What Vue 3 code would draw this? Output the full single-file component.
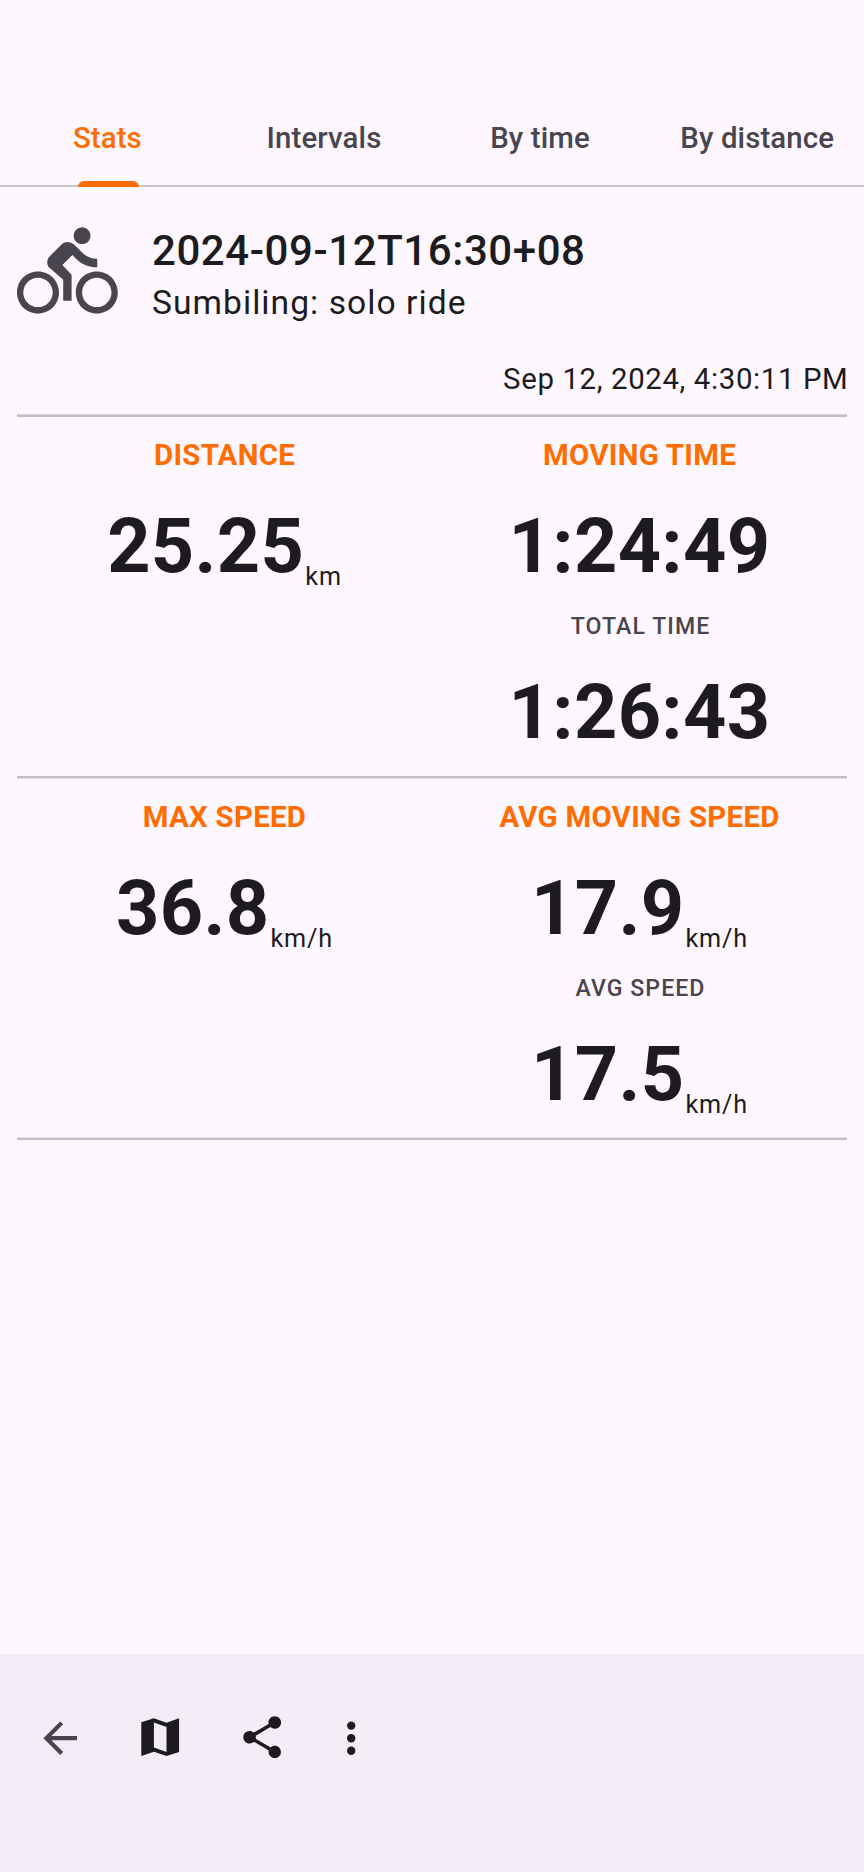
<script setup>
const tabs = ['Stats', 'Intervals', 'By time', 'By distance']

const sections = [
  [
    [{ label: 'DISTANCE', value: '25.25', unit: 'km' }],
    [
      { label: 'MOVING TIME', value: '1:24:49' },
      { label: 'TOTAL TIME', value: '1:26:43', secondary: true },
    ],
  ],
  [
    [{ label: 'MAX SPEED', value: '36.8', unit: 'km/h' }],
    [
      { label: 'AVG MOVING SPEED', value: '17.9', unit: 'km/h' },
      { label: 'AVG SPEED', value: '17.5', unit: 'km/h', secondary: true },
    ],
  ],
]
</script>

<template>
  <div class="screen">
    <nav class="tabs">
      <div v-for="(tab, i) in tabs" :key="tab" class="tab" :class="{ active: i === 0 }">
        {{ tab }}
      </div>
    </nav>

    <main class="content">
      <header class="track">
        <svg class="bike" viewBox="0 0 24 24">
          <path
            d="M15.5 5.5c1.1 0 2-.9 2-2s-.9-2-2-2-2 .9-2 2 .9 2 2 2zM5 12c-2.8 0-5 2.2-5 5s2.2 5 5 5 5-2.2 5-5-2.2-5-5-5zm0 8.5c-1.9 0-3.5-1.6-3.5-3.5s1.6-3.5 3.5-3.5 3.5 1.6 3.5 3.5-1.6 3.5-3.5 3.5zm5.8-10l2.4-2.4.8.8c1.3 1.3 3 2.1 5.1 2.1V9c-1.5 0-2.7-.6-3.6-1.5l-1.9-1.9c-.5-.4-1-.6-1.6-.6s-1.1.2-1.4.6L7.8 8.4c-.4.4-.6.9-.6 1.4 0 .6.2 1.1.6 1.4L11 14v5h2v-6.2l-2.2-2.3zM19 12c-2.8 0-5 2.2-5 5s2.2 5 5 5 5-2.2 5-5-2.2-5-5-5zm0 8.5c-1.9 0-3.5-1.6-3.5-3.5s1.6-3.5 3.5-3.5 3.5 1.6 3.5 3.5-1.6 3.5-3.5 3.5z"
          />
        </svg>
        <div class="names">
          <h1 class="title">2024-09-12T16:30+08</h1>
          <p class="subtitle">Sumbiling: solo ride</p>
        </div>
      </header>
      <p class="date">Sep 12, 2024, 4:30:11 PM</p>

      <section v-for="(columns, s) in sections" :key="s" class="section">
        <div v-for="(stats, c) in columns" :key="c" class="column">
          <div
            v-for="stat in stats"
            :key="stat.label"
            class="stat"
            :class="{ secondary: stat.secondary }"
          >
            <div class="label">{{ stat.label }}</div>
            <div class="reading">
              <span class="value">{{ stat.value }}</span>
              <span v-if="stat.unit" class="unit">{{ stat.unit }}</span>
            </div>
          </div>
        </div>
      </section>
      <div class="end-line"></div>
    </main>

    <footer class="bar">
      <svg class="icon back" viewBox="0 0 24 24">
        <path d="M20 11H7.83l5.59-5.59L12 4l-8 8 8 8 1.41-1.41L7.83 13H20z" />
      </svg>
      <svg class="icon map" viewBox="0 0 24 24">
        <path
          fill-rule="evenodd"
          d="M3 4.9L9 3l6 2.1L21 3v16l-6 2-6-2.1L3 21zM9 5v11.9l6 2.1V7.1z"
        />
      </svg>
      <svg class="icon share" viewBox="0 0 24 24">
        <path
          d="M18 16.08c-.76 0-1.44.3-1.96.77L8.91 12.7c.05-.23.09-.46.09-.7s-.04-.47-.09-.7l7.05-4.11c.54.5 1.25.81 2.04.81 1.66 0 3-1.34 3-3s-1.34-3-3-3-3 1.34-3 3c0 .24.04.47.09.7L8.04 9.81C7.5 9.31 6.79 9 6 9c-1.66 0-3 1.34-3 3s1.34 3 3 3c.79 0 1.5-.31 2.04-.81l7.12 4.16c-.05.21-.08.43-.08.65 0 1.61 1.31 2.92 2.92 2.92s2.92-1.31 2.92-2.92-1.31-2.92-2.92-2.92z"
        />
      </svg>
      <svg class="icon more" viewBox="0 0 24 24">
        <circle cx="12" cy="6" r="2" />
        <circle cx="12" cy="12" r="2" />
        <circle cx="12" cy="18" r="2" />
      </svg>
    </footer>
  </div>
</template>

<style>
body {
  margin: 0;
  background: #fef7ff;
}
</style>

<style scoped>
.screen {
  box-sizing: border-box;
  display: flex;
  flex-direction: column;
  width: 864px;
  height: 1872px;
  background: #fef7ff;
  color: #1d1b20;
  font-family: Roboto, 'Liberation Sans', sans-serif;
}

.tabs {
  display: flex;
  height: 98px;
  margin-top: 89px;
  box-shadow: inset 0 -2px #cac4d0;
}

.tab {
  position: relative;
  box-sizing: border-box;
  width: 216px;
  line-height: 98px;
  text-align: center;
  font-size: 29.4px;
  font-weight: 500;
  letter-spacing: 0.12px;
  color: #49454f;
}

.tab:last-child {
  padding-left: 2.4px;
}

.active {
  padding-right: 1.2px;
  color: #ff6d00;
}

.active::after {
  content: '';
  position: absolute;
  bottom: 0;
  left: 77.8px;
  width: 60.8px;
  height: 6px;
  border-radius: 6px 6px 0 0;
  background: #ff6d00;
}

.content {
  flex: 1;
  padding: 33.7px 17px 0;
}

.track {
  display: flex;
  height: 140.8px;
}

.bike {
  width: 100.8px;
  height: 100.8px;
  margin-right: 34.2px;
  fill: #49454f;
}

.names {
  padding-top: 5.6px;
}

.title {
  margin: 0;
  font-size: 42px;
  line-height: 50px;
  font-weight: 500;
  letter-spacing: 0.57px;
}

.subtitle {
  margin: 6.9px 0 0;
  font-size: 33.6px;
  line-height: 40px;
  letter-spacing: 1.05px;
}

.date {
  margin: 1px -1.4px 0 0;
  text-align: right;
  font-size: 29.4px;
  line-height: 35px;
  letter-spacing: 0.62px;
}

.section {
  box-sizing: border-box;
  display: flex;
  height: 361px;
  padding-top: 24px;
  background: linear-gradient(#c3bfc4 2px, #e4dee5 2px) top / 100% 3px no-repeat;
}

.date + .section {
  height: 362px;
  margin-top: 16.5px;
  background-image: linear-gradient(#d6d1d7 1px, #c3bfc4 1px);
}

.end-line {
  height: 3px;
  background: linear-gradient(#e4dee5 1px, #c3bfc4 1px);
}

.column {
  flex: 1;
}

.stat {
  text-align: center;
}

.label {
  font-size: 29.4px;
  line-height: 35px;
  font-weight: 700;
  letter-spacing: 0.28px;
  color: #ff6d00;
}

.reading {
  display: flex;
  align-items: flex-end;
  justify-content: center;
  height: 90px;
  margin-top: 28px;
}

.value {
  font-size: 75.6px;
  line-height: 90px;
  font-weight: 700;
  letter-spacing: 0.35px;
}

.unit {
  margin-left: 1px;
  font-size: 25.2px;
  line-height: 28px;
  letter-spacing: 0.84px;
}

.secondary {
  padding-top: 21px;
}

.secondary .label {
  padding-left: 2px;
  font-size: 23.1px;
  line-height: 30px;
  font-weight: 500;
  letter-spacing: 1.05px;
  color: #49454f;
}

.secondary .reading {
  margin-top: 25.5px;
}

.bar {
  display: flex;
  box-sizing: border-box;
  height: 218px;
  padding: 58.2px 34.8px 0;
  background: #f3edf7;
}

.icon {
  width: 50.4px;
  height: 50.4px;
  fill: #1d1b20;
}

.back {
  margin-top: 0.4px;
  fill: #49454f;
}

.map {
  margin-left: 49.8px;
}

.share {
  margin-left: 51.3px;
}

.more {
  margin-top: 0.4px;
  margin-left: 38.6px;
}
</style>
